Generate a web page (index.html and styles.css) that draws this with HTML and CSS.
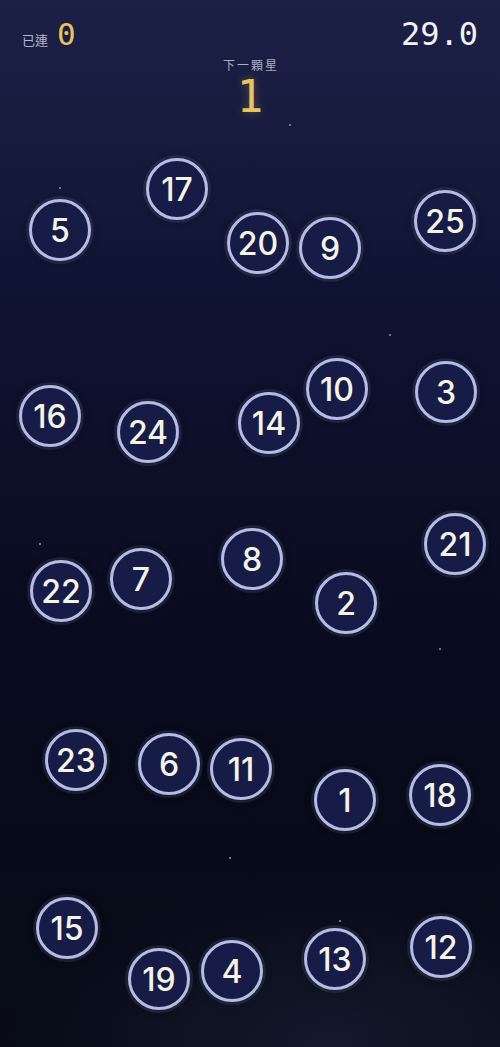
FILE: index.html
```html
<!DOCTYPE html>
<html lang="zh-Hant">
<head>
<meta charset="utf-8">
<title>星星連線</title>
<link rel="stylesheet" href="styles.css">
</head>
<body>
<div class="page">
  <header class="hud">
    <div class="streak"><span class="streak-label">已連</span><span class="streak-value">0</span></div>
    <div class="timer">29.0</div>
  </header>
  <div class="next">
    <div class="next-label">下一顆星</div>
    <div class="next-value">1</div>
  </div>
  <div class="field">
    <span class="dot" style="left:289px;top:124px"></span>
    <span class="dot" style="left:59px;top:187px"></span>
    <span class="dot" style="left:389px;top:334px"></span>
    <span class="dot" style="left:39px;top:543px"></span>
    <span class="dot" style="left:439px;top:648px"></span>
    <span class="dot" style="left:229px;top:857px"></span>
    <span class="dot" style="left:339px;top:920px"></span>

    <div class="star" style="left:146px;top:158px">17</div>
    <div class="star" style="left:29px;top:199px">5</div>
    <div class="star" style="left:227px;top:212px">20</div>
    <div class="star" style="left:299px;top:217px">9</div>
    <div class="star" style="left:414px;top:190px">25</div>
    <div class="star" style="left:306px;top:358px">10</div>
    <div class="star" style="left:415px;top:361px">3</div>
    <div class="star" style="left:19px;top:385px">16</div>
    <div class="star" style="left:117px;top:401px">24</div>
    <div class="star" style="left:238px;top:392px">14</div>
    <div class="star" style="left:424px;top:513px">21</div>
    <div class="star" style="left:221px;top:528px">8</div>
    <div class="star" style="left:110px;top:548px">7</div>
    <div class="star" style="left:30px;top:560px">22</div>
    <div class="star" style="left:315px;top:572px">2</div>
    <div class="star" style="left:45px;top:729px">23</div>
    <div class="star" style="left:138px;top:733px">6</div>
    <div class="star" style="left:210px;top:738px">11</div>
    <div class="star" style="left:314px;top:769px">1</div>
    <div class="star" style="left:409px;top:764px">18</div>
    <div class="star" style="left:36px;top:897px">15</div>
    <div class="star" style="left:128px;top:948px">19</div>
    <div class="star" style="left:201px;top:940px">4</div>
    <div class="star" style="left:304px;top:928px">13</div>
    <div class="star" style="left:410px;top:916px">12</div>
  </div>
</div>
</body>
</html>
```
FILE: styles.css
```css
html, body {
  margin: 0;
  padding: 0;
}
body {
  width: 500px;
  height: 1047px;
  overflow: hidden;
  background: #080b1a;
  font-family: "Noto Sans CJK TC", "Noto Sans", sans-serif;
}
.page {
  position: relative;
  width: 500px;
  height: 1047px;
  background:
    radial-gradient(ellipse 320px 160px at 330px 1040px, rgba(40, 52, 80, 0.35), rgba(40, 52, 80, 0) 100%),
    linear-gradient(180deg, #1c2046 0%, #161a3c 15%, #0e1230 32%, #0a0d22 55%, #070a18 80%, #080b17 100%);
}
.hud {
  display: flex;
  justify-content: space-between;
  align-items: flex-end;
  padding: 18px 22px 0 22px;
}
.streak {
  display: flex;
  align-items: baseline;
  gap: 9px;
}
.streak-label {
  font-size: 13px;
  color: #b3b7cf;
}
.streak-value {
  font-family: "DejaVu Sans Mono", monospace;
  font-size: 31px;
  line-height: 1;
  color: #e7c25f;
}
.timer {
  font-family: "DejaVu Sans Mono", monospace;
  font-size: 32px;
  line-height: 1;
  color: #f1f1f4;
}
.next {
  display: flex;
  flex-direction: column;
  align-items: center;
  margin-top: 7px;
}
.next-label {
  font-size: 12px;
  letter-spacing: 2px;
  padding-left: 2px;
  color: #a9aec8;
  line-height: 16px;
}
.next-value {
  font-family: "DejaVu Sans Mono", monospace;
  font-size: 44px;
  line-height: 1;
  margin-top: 2px;
  color: #e9c362;
  text-shadow: 0 0 10px rgba(233, 195, 98, 0.35);
}
.field {
  position: absolute;
  inset: 0;
}
.dot {
  position: absolute;
  width: 2px;
  height: 2px;
  border-radius: 50%;
  background: #8d93ad;
}
.star {
  position: absolute;
  box-sizing: border-box;
  width: 62px;
  height: 62px;
  border-radius: 50%;
  border: 3px solid #b6bbe4;
  background: #171c47;
  box-shadow: 0 0 0 3px rgba(130, 140, 190, 0.16), 0 0 8px rgba(0, 0, 0, 0.45);
  display: flex;
  align-items: center;
  justify-content: center;
  font-family: Inter, "Noto Sans", sans-serif;
  font-weight: 500;
  font-size: 32px;
  color: #f5f3e6;
  line-height: 1;
  padding-top: 1px;
}
```
